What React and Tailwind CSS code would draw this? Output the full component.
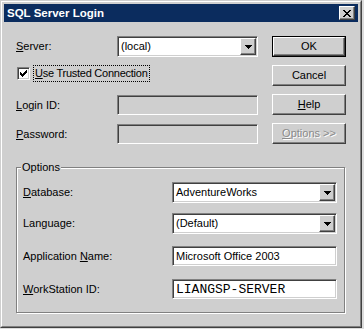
import React from 'react';

// tiny pixel-art helper for the classic glyphs (check mark, arrows, close X)
const Pixels = ({ rows, color = '#000', className }) => (
  <svg
    width={rows[0].length}
    height={rows.length}
    viewBox={`0 0 ${rows[0].length} ${rows.length}`}
    shapeRendering="crispEdges"
    className={className}
  >
    {rows.map((row, y) =>
      row.split('').map((c, x) =>
        c === 'X' ? <rect key={`${x}-${y}`} x={x} y={y} width="1" height="1" fill={color} /> : null
      )
    )}
  </svg>
);

const CLOSE = ['XX....XX', '.XX..XX.', '..XXXX..', '...XX...', '..XXXX..', '.XX..XX.', 'XX....XX'];
const ARROW = ['XXXXXXX', '.XXXXX.', '..XXX..', '...X...'];
const CHECK = ['......X', '.....XX', 'X...XXX', 'XX.XXX.', 'XXXXX..', '.XXX...', '..X....'];

const raised =
  'border border-t-white border-l-white border-b-[#404040] border-r-[#404040] shadow-[inset_-1px_-1px_0_#808080] bg-[#cfcfcf]';
const sunken =
  'border border-t-[#808080] border-l-[#808080] border-b-white border-r-white shadow-[inset_1px_1px_0_#404040,inset_-1px_-1px_0_#cfcfcf]';

const Button = ({ children, isDefault, disabled }) =>
  isDefault ? (
    <div className="h-[21px] border border-black">
      <div className={`${raised} h-full flex items-center justify-center`}>{children}</div>
    </div>
  ) : (
    <div
      className={`${raised} h-[21px] flex items-center justify-center ${
        disabled ? 'text-[#8a8a8a] [text-shadow:1px_1px_0_#fff]' : ''
      }`}
    >
      {children}
    </div>
  );

const Combo = ({ value, width }) => (
  <div className={`${sunken} ${width} h-[21px] bg-white flex p-[1px]`}>
    <div className="flex-1 flex items-center pl-[2px]">{value}</div>
    <div className={`${raised} w-[16px] flex items-center justify-center`}>
      <Pixels rows={ARROW} />
    </div>
  </div>
);

const Edit = ({ value, width, disabled, mono }) => (
  <div
    className={`${sunken} ${width} h-[20px] flex items-center pl-[3px] ${
      disabled ? 'bg-[#cfcfcf]' : 'bg-white'
    } ${mono ? "font-['Liberation_Mono','Courier_New',monospace] text-[13px]" : ''}`}
  >
    {value}
  </div>
);

const U = ({ children }) => <span className="underline underline-offset-[1px]">{children}</span>;

export default function App() {
  return (
    <div className="w-[364px] h-[329px] bg-[#dcdcdc] font-['Liberation_Sans',Arial,sans-serif] text-[11px] leading-[13px] text-black">
      <div className="w-[362px] h-[328px] border border-t-[#cfcfcf] border-l-[#cfcfcf] border-b-[#404040] border-r-[#404040] bg-[#cfcfcf]">
        <div className="h-full border border-t-white border-l-white border-b-[#808080] border-r-[#808080] p-[2px] flex flex-col">
          {/* TITLE BAR */}
          <div className="h-[18px] shrink-0 bg-[#0b2c5e] flex items-center pl-[3px] pr-[3px]">
            <span className="font-bold text-[11.5px] text-white">SQL Server Login</span>
            <div className={`${raised} ml-auto w-[16px] h-[14px] flex items-center justify-center`}>
              <Pixels rows={CLOSE} />
            </div>
          </div>

          <div className="pl-[12px] pt-[14px]">
            {/* LOGIN FIELDS + BUTTONS */}
            <div className="flex gap-[14px]">
              <div className="w-[242px] flex flex-col">
                <div className="h-[21px] flex items-center">
                  <span className="w-[101px]">
                    <U>S</U>erver:
                  </span>
                  <Combo value="(local)" width="w-[141px]" />
                </div>

                <div className="mt-[8px] h-[17px] flex items-center pl-[1px]">
                  <div className={`${sunken} w-[13px] h-[13px] bg-white flex items-center justify-center`}>
                    <Pixels rows={CHECK} />
                  </div>
                  <span className="ml-[3px] h-[17px] px-[1px] flex items-center border border-dotted border-black tracking-[-0.25px]">
                    <U>U</U>se Trusted Connection
                  </span>
                </div>

                <div className="mt-[13px] h-[20px] flex items-center">
                  <span className="w-[101px]">
                    <U>L</U>ogin ID:
                  </span>
                  <Edit width="w-[141px]" disabled />
                </div>

                <div className="mt-[9px] h-[20px] flex items-center">
                  <span className="w-[101px]">
                    <U>P</U>assword:
                  </span>
                  <Edit width="w-[141px]" disabled />
                </div>
              </div>

              <div className="w-[74px] flex flex-col gap-[8px]">
                <Button isDefault>OK</Button>
                <Button>Cancel</Button>
                <Button>
                  <span>
                    <U>H</U>elp
                  </span>
                </Button>
                <Button disabled>
                  <span>
                    <U>O</U>ptions &gt;&gt;
                  </span>
                </Button>
              </div>
            </div>

            {/* OPTIONS GROUP */}
            <div className="relative mt-[23px] w-[329px] border border-[#808080] shadow-[inset_1px_1px_0_#fff,1px_1px_0_#fff] pl-[6px] pr-[7px] pt-[14px] pb-[13px]">
              <span className="absolute -top-[7px] left-[4px] px-[1px] bg-[#cfcfcf]">Options</span>

              <div className="h-[21px] flex items-center">
                <span className="w-[149px]">
                  <U>D</U>atabase:
                </span>
                <Combo value="AdventureWorks" width="w-[165px]" />
              </div>
              <div className="mt-[10px] h-[21px] flex items-center">
                <span className="w-[149px]">Language:</span>
                <Combo value="(Default)" width="w-[165px]" />
              </div>
              <div className="mt-[12px] h-[20px] flex items-center">
                <span className="w-[149px]">
                  Application <U>N</U>ame:
                </span>
                <Edit value="Microsoft Office 2003" width="w-[165px]" />
              </div>
              <div className="mt-[13px] h-[20px] flex items-center">
                <span className="w-[149px]">
                  <U>W</U>orkStation ID:
                </span>
                <Edit value="LIANGSP-SERVER" width="w-[165px]" mono />
              </div>
            </div>
          </div>
        </div>
      </div>
    </div>
  );
}
